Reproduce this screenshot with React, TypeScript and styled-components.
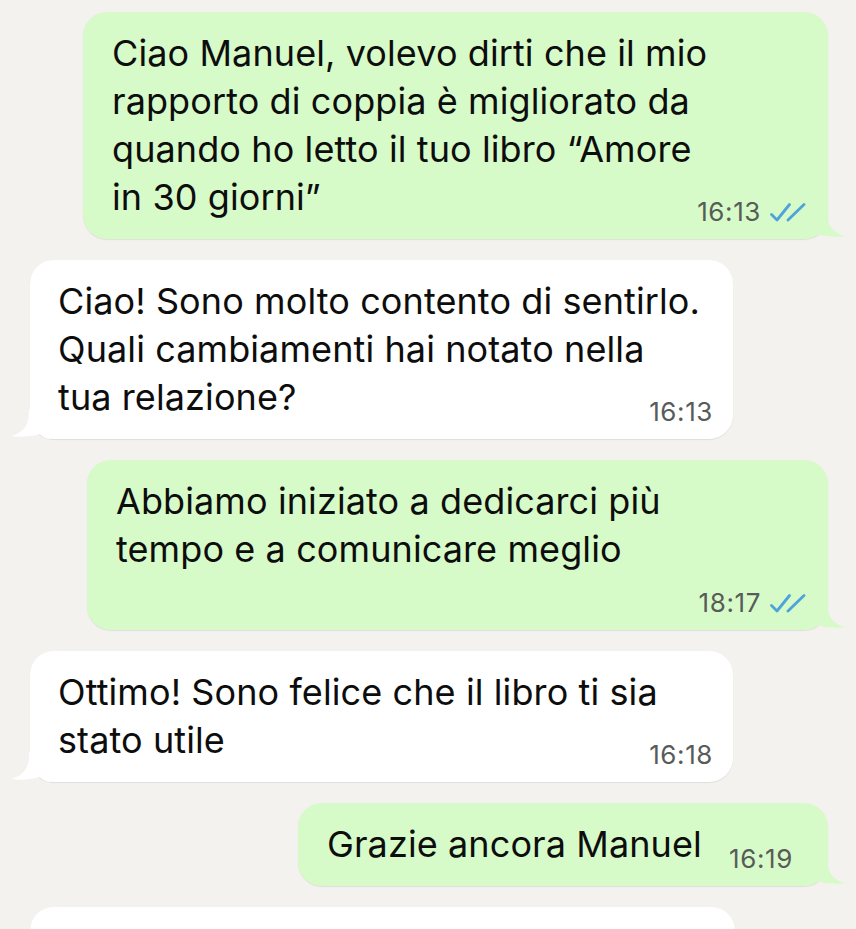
import React from 'react'
import styled, { createGlobalStyle } from 'styled-components'

interface Message {
  id: number
  out: boolean
  lines: string[]
  time: string
  width: number
  read?: boolean
  timeOwnLine?: boolean
}

const messages: Message[] = [
  {
    id: 1,
    out: true,
    lines: [
      'Ciao Manuel, volevo dirti che il mio',
      'rapporto di coppia è migliorato da',
      'quando ho letto il tuo libro “Amore',
      'in 30 giorni”',
    ],
    time: '16:13',
    width: 745,
    read: true,
  },
  {
    id: 2,
    out: false,
    lines: ['Ciao! Sono molto contento di sentirlo.', 'Quali cambiamenti hai notato nella', 'tua relazione?'],
    time: '16:13',
    width: 703,
  },
  {
    id: 3,
    out: true,
    lines: ['Abbiamo iniziato a dedicarci più', 'tempo e a comunicare meglio'],
    time: '18:17',
    width: 741,
    read: true,
    timeOwnLine: true,
  },
  {
    id: 4,
    out: false,
    lines: ['Ottimo! Sono felice che il libro ti sia', 'stato utile'],
    time: '16:18',
    width: 703,
  },
  {
    id: 5,
    out: true,
    lines: ['Grazie ancora Manuel'],
    time: '16:19',
    width: 530,
  },
]

// bubble tail, drawn for the outgoing side and mirrored for incoming
const Tail = ({ color, out }: { color: string; out: boolean }) => (
  <TailSvg $out={out} width="40" height="30" viewBox="0 0 40 30">
    <path d="M0 0 H21 V4 C21 16 27 24 39 27 C32 28.5 19 27.5 10 25 C8 27 4 30 0 30 Z" fill={color} />
  </TailSvg>
)

const DoubleCheck = () => (
  <svg width="36" height="19" viewBox="0 0 36 19">
    <g fill="none" stroke="#4fa3dc" strokeWidth="2.8" strokeLinecap="round" strokeLinejoin="round">
      <path d="M1.5 11.5 L7 17 L19.5 1.5" />
      <path d="M18 17 L34 1.5" />
    </g>
  </svg>
)

const Bubble = ({ msg }: { msg: Message }) => {
  const color = msg.out ? '#d7fac9' : '#ffffff'
  return (
    <Row $out={msg.out}>
      <Box $out={msg.out} $width={msg.width} $bg={color}>
        <Text>
          {msg.lines.map((line, idx) => (
            <React.Fragment key={idx}>
              {idx > 0 && <br />}
              {line}
            </React.Fragment>
          ))}
        </Text>
        <Meta $ownLine={!!msg.timeOwnLine} $extra={msg.out && !msg.read}>
          <Time>{msg.time}</Time>
          {msg.read && <DoubleCheck />}
        </Meta>
        <Tail color={color} out={msg.out} />
      </Box>
    </Row>
  )
}

const App = () => {
  return (
    <>
      <GlobalStyle />
      <Chat>
        {messages.map((msg) => (
          <Bubble key={msg.id} msg={msg} />
        ))}
        <Row $out={false}>
          <Box $out={false} $width={705} $bg="#ffffff" style={{ height: 120 }} />
        </Row>
      </Chat>
    </>
  )
}

const GlobalStyle = createGlobalStyle`
  html, body {
    margin: 0;
    padding: 0;
    overflow: hidden;
    background: #f3f2ee;
  }
  body {
    font-family: Inter, "Liberation Sans", sans-serif;
    -webkit-font-smoothing: antialiased;
  }
`

const Chat = styled.div`
  display: flex;
  flex-direction: column;
  gap: 21px;
  padding-top: 12px;
`

const Row = styled.div<{ $out: boolean }>`
  display: flex;
  justify-content: ${({ $out }) => ($out ? 'flex-end' : 'flex-start')};
  padding: ${({ $out }) => ($out ? '0 28px 0 0' : '0 0 0 30px')};
`

const Box = styled.div<{ $out: boolean; $width: number; $bg: string }>`
  position: relative;
  display: flow-root;
  box-sizing: border-box;
  width: ${({ $width }) => $width}px;
  padding: ${({ $out }) => ($out ? '17px 22px 14px 29px' : '17px 20px 14px 28px')};
  background: ${({ $bg }) => $bg};
  border-radius: 24px;
  box-shadow: 0 1px 1px rgba(0, 0, 0, 0.08);
`

const Text = styled.span`
  font-size: 36px;
  line-height: 48px;
  color: #0d0d0d;
  letter-spacing: 0.1px;
`

const Meta = styled.span<{ $ownLine: boolean; $extra: boolean }>`
  display: flex;
  align-items: center;
  justify-content: flex-end;
  gap: 9px;
  height: 26px;
  margin-left: 18px;
  margin-right: ${({ $extra }) => ($extra ? 13 : 0)}px;
  float: ${({ $ownLine }) => ($ownLine ? 'none' : 'right')};
  margin-top: ${({ $ownLine }) => ($ownLine ? 17 : 26)}px;
`

const Time = styled.span`
  font-size: 26px;
  line-height: 26px;
  color: #585c59;
  letter-spacing: 0.6px;
`

const TailSvg = styled.svg<{ $out: boolean }>`
  position: absolute;
  bottom: 0;
  ${({ $out }) => ($out ? 'right: -18px;' : 'left: -20px; transform: scaleX(-1);')}
`

export default App
